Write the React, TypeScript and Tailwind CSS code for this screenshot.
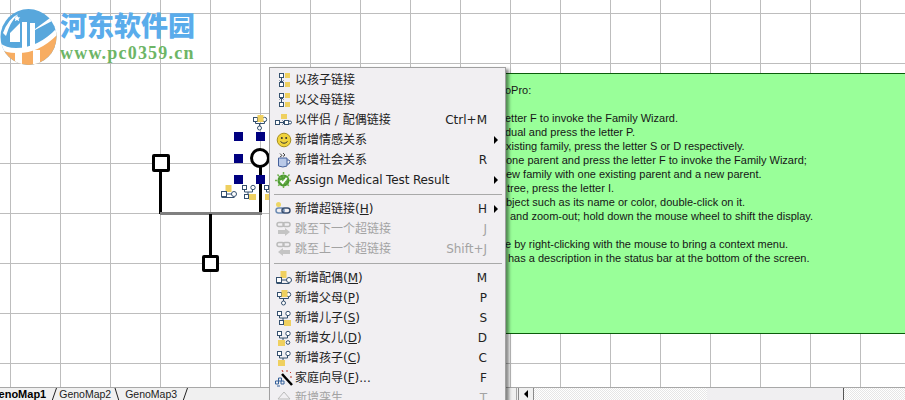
import React from "react";

const MENU_FONT = "font-['Tahoma','DejaVu_Sans','Noto_Sans_CJK_SC',sans-serif]";

// small genogram icons used by the menu and the canvas
const Tree = ({ kind }: { kind: string }) => {
    const line = "#35506e";
    const y = "#efd060";
    if (kind === "childLink" || kind === "parentLink") {
        const down = kind === "childLink";
        return (
            <svg width="16" height="16" viewBox="0 0 16 16" fill="none" stroke={line}>
                <rect x="3.5" y="1.5" width="4" height="4" fill="#fff" />
                <path d={down ? "M5.5 5.5v5M3.5 8.5l2 2 2-2" : "M5.5 10.5v-5M3.5 7.5l2-2 2 2"} />
                <rect x="3.5" y="10.5" width="4" height="4" fill="#fff" />
                <rect x="9" y="1" width="5" height="5" fill={y} stroke="none" />
                <rect x="9" y="10" width="5" height="5" fill={y} stroke="none" />
            </svg>
        );
    }
    if (kind === "spouseLink") {
        return (
            <svg width="17" height="16" viewBox="0 0 17 16" fill="none" stroke={line}>
                <rect x="0.5" y="8.5" width="4" height="4" fill="#fff" />
                <path d="M4.5 10.5h5M7.5 8.5l2 2-2 2" />
                <rect x="9.5" y="8.5" width="4" height="4" fill="#fff" />
                <circle cx="15" cy="10.5" r="1.5" fill="#fff" />
                <rect x="6" y="2" width="6" height="5" fill={y} stroke="none" />
            </svg>
        );
    }
    if (kind === "spouse") {
        return (
            <svg width="17" height="16" viewBox="0 0 17 16" fill="none" stroke={line}>
                <rect x="5.5" y="1" width="6" height="7" fill={y} stroke="none" />
                <path d="M6.5 10h6M1.5 13.5h13" />
                <rect x="1.5" y="7.5" width="5" height="5" fill="#fff" />
                <circle cx="14" cy="10" r="2.5" fill="#fff" />
            </svg>
        );
    }
    if (kind === "parents") {
        return (
            <svg width="16" height="16" viewBox="0 0 16 16" fill="none" stroke={line}>
                <rect x="1.5" y="2.5" width="4" height="4" fill="#fff" />
                <circle cx="12.5" cy="4.5" r="2.2" fill="#fff" />
                <rect x="5.5" y="0" width="6" height="7" fill={y} stroke="none" />
                <path d="M3.5 6.5v2h9v-2M7.5 8.5v3" />
                <circle cx="7.5" cy="13" r="2" fill="#fff" />
            </svg>
        );
    }
    const leftYellow = kind === "daughter" || kind === "child";
    return (
        <svg width="16" height="16" viewBox="0 0 16 16" fill="none" stroke={line}>
            <rect x="1.5" y="1.5" width="4" height="4" fill="#fff" />
            <circle cx="12" cy="3.5" r="2.2" fill="#fff" />
            <path d="M3.5 5.5v2.5h8V5.5M7 8v3" />
            {leftYellow ? (
                <>
                    <rect x="2" y="10" width="7" height="6" fill={y} stroke="none" />
                    {kind === "daughter" && <circle cx="12" cy="12.5" r="1.8" fill="#fff" />}
                </>
            ) : (
                <>
                    <rect x="3.5" y="10.5" width="4" height="4" fill="#fff" />
                    <rect x="8" y="10" width="7" height="6" fill={y} stroke="none" />
                </>
            )}
        </svg>
    );
};

const Smile = () => (
    <svg width="16" height="16" viewBox="0 0 16 16">
        <circle cx="8" cy="8" r="6.8" fill="#f0d33c" stroke="#a88f20" />
        <circle cx="5.8" cy="6" r="1" fill="#333" />
        <circle cx="10.2" cy="6" r="1" fill="#333" />
        <path d="M4.5 9.5q3.5 3.5 7 0" fill="none" stroke="#333" />
    </svg>
);

const Mug = () => (
    <svg width="16" height="16" viewBox="0 0 16 16">
        <path d="M4 1.5l2 2-2 1.5M7 1l2 2-2 1.5" fill="none" stroke="#444" />
        <path d="M2.5 6h8.5v8q-4 2-8.5 0z" fill="#b9c9e8" stroke="#45609a" />
        <path d="M11 8h2q2 1 0 4h-2" fill="none" stroke="#45609a" />
    </svg>
);

const Medical = () => (
    <svg width="17" height="17" viewBox="0 0 17 17">
        <circle cx="8.5" cy="8.5" r="6" fill="#4d9a32" />
        <path d="M8.5 0v17M0 8.5h17M2.5 2.5l12 12M14.5 2.5l-12 12" stroke="#6fb24d" strokeWidth="1.5" strokeDasharray="2 1.5" />
        <path d="M5.5 8.5l2.2 2.5 4-5" fill="none" stroke="#fff" strokeWidth="2" />
    </svg>
);

const Chain = ({ dir }: { dir?: "next" | "prev" }) => {
    if (!dir) {
        return (
            <svg width="17" height="16" viewBox="0 0 17 16" fill="none">
                <circle cx="3.5" cy="3.5" r="2.5" fill="#ecd565" />
                <rect x="1" y="7" width="8" height="5" rx="2.5" stroke="#6d8cb4" strokeWidth="1.5" />
                <rect x="7" y="7" width="8" height="5" rx="2.5" stroke="#3a4f70" strokeWidth="1.5" />
            </svg>
        );
    }
    return (
        <svg width="17" height="16" viewBox="0 0 17 16" fill="none">
            <rect x="2" y="1.5" width="7" height="4" rx="2" stroke="#bbb" strokeWidth="1.5" />
            <rect x="8" y="1.5" width="7" height="4" rx="2" stroke="#bbb" strokeWidth="1.5" />
            <path
                d={dir === "next" ? "M3 9h7V7l5 4-5 4v-2H3z" : "M15 9H8V7l-5 4 5 4v-2h7z"}
                fill="#c4c4c4"
            />
        </svg>
    );
};

const Wand = () => (
    <svg width="18" height="18" viewBox="0 0 18 18">
        <path d="M7 5l10 11" stroke="#000" strokeWidth="2.5" />
        <path d="M12 1v2M16 3l-1 1M7 1l1 2M17 8h-2" stroke="#c0392b" />
        <path d="M0.5 12h3v3h-3zM6 12h3v3H6zM2 17h3M3.5 9h3v3h-3z" fill="none" stroke="#35609a" />
    </svg>
);

const Twins = () => (
    <svg width="16" height="16" viewBox="0 0 16 16" fill="none" stroke="#bbb">
        <path d="M8 2L2 9h12zM5 12h6" />
    </svg>
);

type Item = {
    icon: React.ReactNode;
    label: React.ReactNode;
    key_?: string;
    arrow?: boolean;
    off?: boolean;
};

const top: Item[] = [
    { icon: <Tree kind="childLink" />, label: "以孩子链接" },
    { icon: <Tree kind="parentLink" />, label: "以父母链接" },
    { icon: <Tree kind="spouseLink" />, label: "以伴侣 / 配偶链接", key_: "Ctrl+M" },
    { icon: <Smile />, label: "新增情感关系", arrow: true },
    { icon: <Mug />, label: "新增社会关系", key_: "R" },
    { icon: <Medical />, label: <span className="tracking-[-0.12px]">Assign Medical Test Result</span>, arrow: true },
];

const links: Item[] = [
    { icon: <Chain />, label: <>新增超链接(<u>H</u>)</>, key_: "H", arrow: true },
    { icon: <Chain dir="next" />, label: "跳至下一个超链接", key_: "J", off: true },
    { icon: <Chain dir="prev" />, label: "跳至上一个超链接", key_: "Shift+J", off: true },
];

const add: Item[] = [
    { icon: <Tree kind="spouse" />, label: <>新增配偶(<u>M</u>)</>, key_: "M" },
    { icon: <Tree kind="parents" />, label: <>新增父母(<u>P</u>)</>, key_: "P" },
    { icon: <Tree kind="son" />, label: <>新增儿子(<u>S</u>)</>, key_: "S" },
    { icon: <Tree kind="daughter" />, label: <>新增女儿(<u>D</u>)</>, key_: "D" },
    { icon: <Tree kind="child" />, label: <>新增孩子(<u>C</u>)</>, key_: "C" },
    { icon: <Wand />, label: <>家庭向导(<u>F</u>)...</>, key_: "F" },
    { icon: <Twins />, label: "新增孪生", key_: "T", off: true },
];

const MenuRow = ({ item }: { item: Item }) => (
    <div className={`flex h-5 shrink-0 items-center text-[12px] ${item.off ? "text-[#a3a3a3]" : "text-[#222]"}`}>
        <div className="flex w-[25px] shrink-0 justify-center pl-[2px]">{item.icon}</div>
        <span className="whitespace-nowrap">{item.label}</span>
        <span className="ml-auto">{item.key_}</span>
        <div className="flex w-[18px] shrink-0 justify-center">
            {item.arrow && <div className="border-y-[4px] border-l-[4px] border-y-transparent border-l-black" />}
        </div>
    </div>
);

const Separator = () => (
    <div className="flex h-[9px] shrink-0 items-center pl-[4px] pr-[3px]">
        <div className="h-px w-full bg-[#a9a9a9]" />
    </div>
);

const ContextMenu = () => (
    <div
        className={`absolute left-[269px] top-[67px] flex h-[340px] w-[237px] flex-col border border-[#a0a0a0] bg-[#f1eff2] pt-[2px] shadow-[3px_2px_3px_rgba(0,0,0,0.45)] ${MENU_FONT}`}
    >
        {top.map((item, i) => <MenuRow key={i} item={item} />)}
        <Separator />
        {links.map((item, i) => <MenuRow key={i} item={item} />)}
        <Separator />
        {add.map((item, i) => <MenuRow key={i} item={item} />)}
    </div>
);

const noteLines = [
    { text: "oPro:", cls: "pl-[25px]" },
    { text: "", cls: "" },
    { text: "etter F to invoke the Family Wizard.", cls: "pl-[25px]" },
    { text: "dual and press the letter P.", cls: "pl-[25px]" },
    { text: "xisting family, press the letter S or D respectively.", cls: "pl-[26px]" },
    { text: "one parent and press the letter F to invoke the Family Wizard;", cls: "pl-[26px]" },
    { text: "ew family with one existing parent and a new parent.", cls: "pl-[26px]" },
    { text: "tree, press the letter I.", cls: "pl-[27px]" },
    { text: "bject such as its name or color, double-click on it.", cls: "pl-[26px]" },
    { text: "and zoom-out; hold down the mouse wheel to shift the display.", cls: "pl-[30px]" },
    { text: "", cls: "" },
    { text: "e by right-clicking with the mouse to bring a context menu.", cls: "pl-[25px]" },
    { text: "has a description in the status bar at the bottom of the screen.", cls: "pl-[28px]" },
];

const Note = () => (
    <div className="absolute left-[480px] right-0 top-[73px] h-[261px] overflow-hidden border-y border-y-[#0a5c0a] bg-[#99ff99] pt-[9px] font-['Liberation_Sans',sans-serif] text-[11px] leading-[14px] text-[#161616]">
        {noteLines.map((line, i) => (
            <div key={i} className={`h-[14px] whitespace-nowrap ${line.cls}`}>{line.text}</div>
        ))}
    </div>
);

const Genogram = () => (
    <>
        <div className="absolute left-[159px] top-[170px] h-[44px] w-[3px] bg-black" />
        <div className="absolute left-[259px] top-[166px] h-[48px] w-[3px] bg-black" />
        <div className="absolute left-[160px] top-[212px] h-[3px] w-[102px] bg-[#808080]" />
        <div className="absolute left-[209px] top-[214px] h-[42px] w-[3px] bg-black" />
        <div className="absolute left-[152px] top-[154px] size-[18px] rounded-[2px] border-[3px] border-black bg-white" />
        <div className="absolute left-[202px] top-[255px] size-[17px] rounded-[2px] border-[3px] border-black bg-white" />
        <div className="absolute left-[250px] top-[148px] size-[20px] rounded-full border-[3px] border-black bg-white" />
        <div className="absolute left-[234px] top-[132px] size-[9px] bg-[#000080]" />
        <div className="absolute left-[256px] top-[132px] size-[9px] bg-[#000080]" />
        <div className="absolute left-[234px] top-[154px] size-[9px] bg-[#000080]" />
        <div className="absolute left-[234px] top-[175px] size-[9px] bg-[#000080]" />
        <div className="absolute left-[256px] top-[175px] size-[9px] bg-[#000080]" />
        <div className="absolute left-[252px] top-[115px]"><Tree kind="parents" /></div>
        <div className="absolute left-[220px] top-[184px]"><Tree kind="spouse" /></div>
        <div className="absolute left-[241px] top-[184px]"><Tree kind="son" /></div>
        <div className="absolute left-[263px] top-[184px]"><Tree kind="daughter" /></div>
    </>
);

const Logo = () => (
    <div className="absolute left-0 top-[8px] flex gap-[3px]">
        <svg width="57" height="59" viewBox="0 0 57 59">
            <defs>
                <clipPath id="disc"><circle cx="28.5" cy="29" r="28" /></clipPath>
            </defs>
            <g clipPath="url(#disc)">
                <rect width="57" height="59" fill="#58a7dc" />
                <path d="M0 42Q30 50 57 24V59H0z" fill="#f7ad62" />
                <path d="M0 35Q6 40 16 40Q38 40 57 20V27Q38 46 16 45Q6 45 0 41z" fill="#fff" />
                <path d="M10 34V25L20 15V34zM22 40V14h5v26zM30 39V15h5v6L50 10l2 3-17 9v16z" fill="#fff" />
                <path d="M15 44h7v14h-7zM33 42h7v14h-7z" fill="#fff" />
                <path d="M3 25Q8 11 18 6Q10 14 6 28z" fill="#fff" />
                <path d="M17 7l1 2.2 2.3.3-1.7 1.5.5 2.3-2.100-1.200-2.100 1.200.5-2.300-1.700-1.500 2.300-.3z" fill="#fff" />
            </g>
        </svg>
        <div className="flex flex-col items-start">
            <div className="mt-[1px] font-['Noto_Sans_CJK_SC',sans-serif] text-[27px] font-black leading-[32px] text-[#5aaceb]">河东软件园</div>
            <div className="mt-[2px] font-['Liberation_Serif',serif] text-[18px] font-bold leading-[20px] tracking-[1.2px] text-[#6db566]">www.pc0359.cn</div>
        </div>
    </div>
);

const TabBar = () => (
    <div className="flex h-[13px] shrink-0 border-t border-[#a8a8a8] bg-[#f0f0f0] font-['Liberation_Sans',sans-serif] text-[10.5px] leading-[12px]">
        <div className="flex w-[269px] items-start overflow-hidden text-[#222]">
            <span className="-ml-[10px] font-bold text-[11px] text-black">GenoMap1</span>
            <svg className="ml-[5px] shrink-0" width="7" height="13" viewBox="0 0 7 13" fill="none" stroke="#222"><path d="M5.5 0L1 13" /></svg>
            <span className="ml-[1px]">GenoMap2</span>
            <svg className="ml-[3px] shrink-0" width="7" height="13" viewBox="0 0 7 13" fill="none" stroke="#222"><path d="M1 0L5 13" /></svg>
            <span className="ml-[4px]">GenoMap3</span>
            <svg className="ml-[5px] shrink-0" width="7" height="13" viewBox="0 0 7 13" fill="none" stroke="#222"><path d="M5.5 0L1 13" /></svg>
        </div>
        <div className="ml-[237px] flex flex-1">
            <div className="w-[11px] border-r border-[#a8a8a8] bg-[#f0f0f0]" />
            <div className="ml-px flex w-[16px] items-center justify-center border-x border-[#8a8a8a] bg-[#f0f0f0]">
                <div className="border-y-[4px] border-r-[4px] border-y-transparent border-r-black" />
            </div>
            <div className="w-[173px] bg-[repeating-conic-gradient(#ffffff_0_25%,#e6e6e6_0_50%)] bg-[size:2px_2px]" />
            <div className="w-[137px] border-r border-[#555] bg-[#f0eff1]" />
            <div className="flex-1 bg-[repeating-conic-gradient(#ffffff_0_25%,#e6e6e6_0_50%)] bg-[size:2px_2px]" />
        </div>
    </div>
);

export default function App() {
    return (
        <div className="relative flex h-[400px] w-[905px] flex-col overflow-hidden bg-white">
            <div className="relative flex-1 bg-[linear-gradient(to_right,#bdbdbd_1px,transparent_1px),linear-gradient(to_bottom,#bdbdbd_1px,transparent_1px)] bg-[size:50px_50px] bg-[position:10px_13px]">
                <Genogram />
                <Note />
                <Logo />
            </div>
            <TabBar />
            <ContextMenu />
        </div>
    );
}
